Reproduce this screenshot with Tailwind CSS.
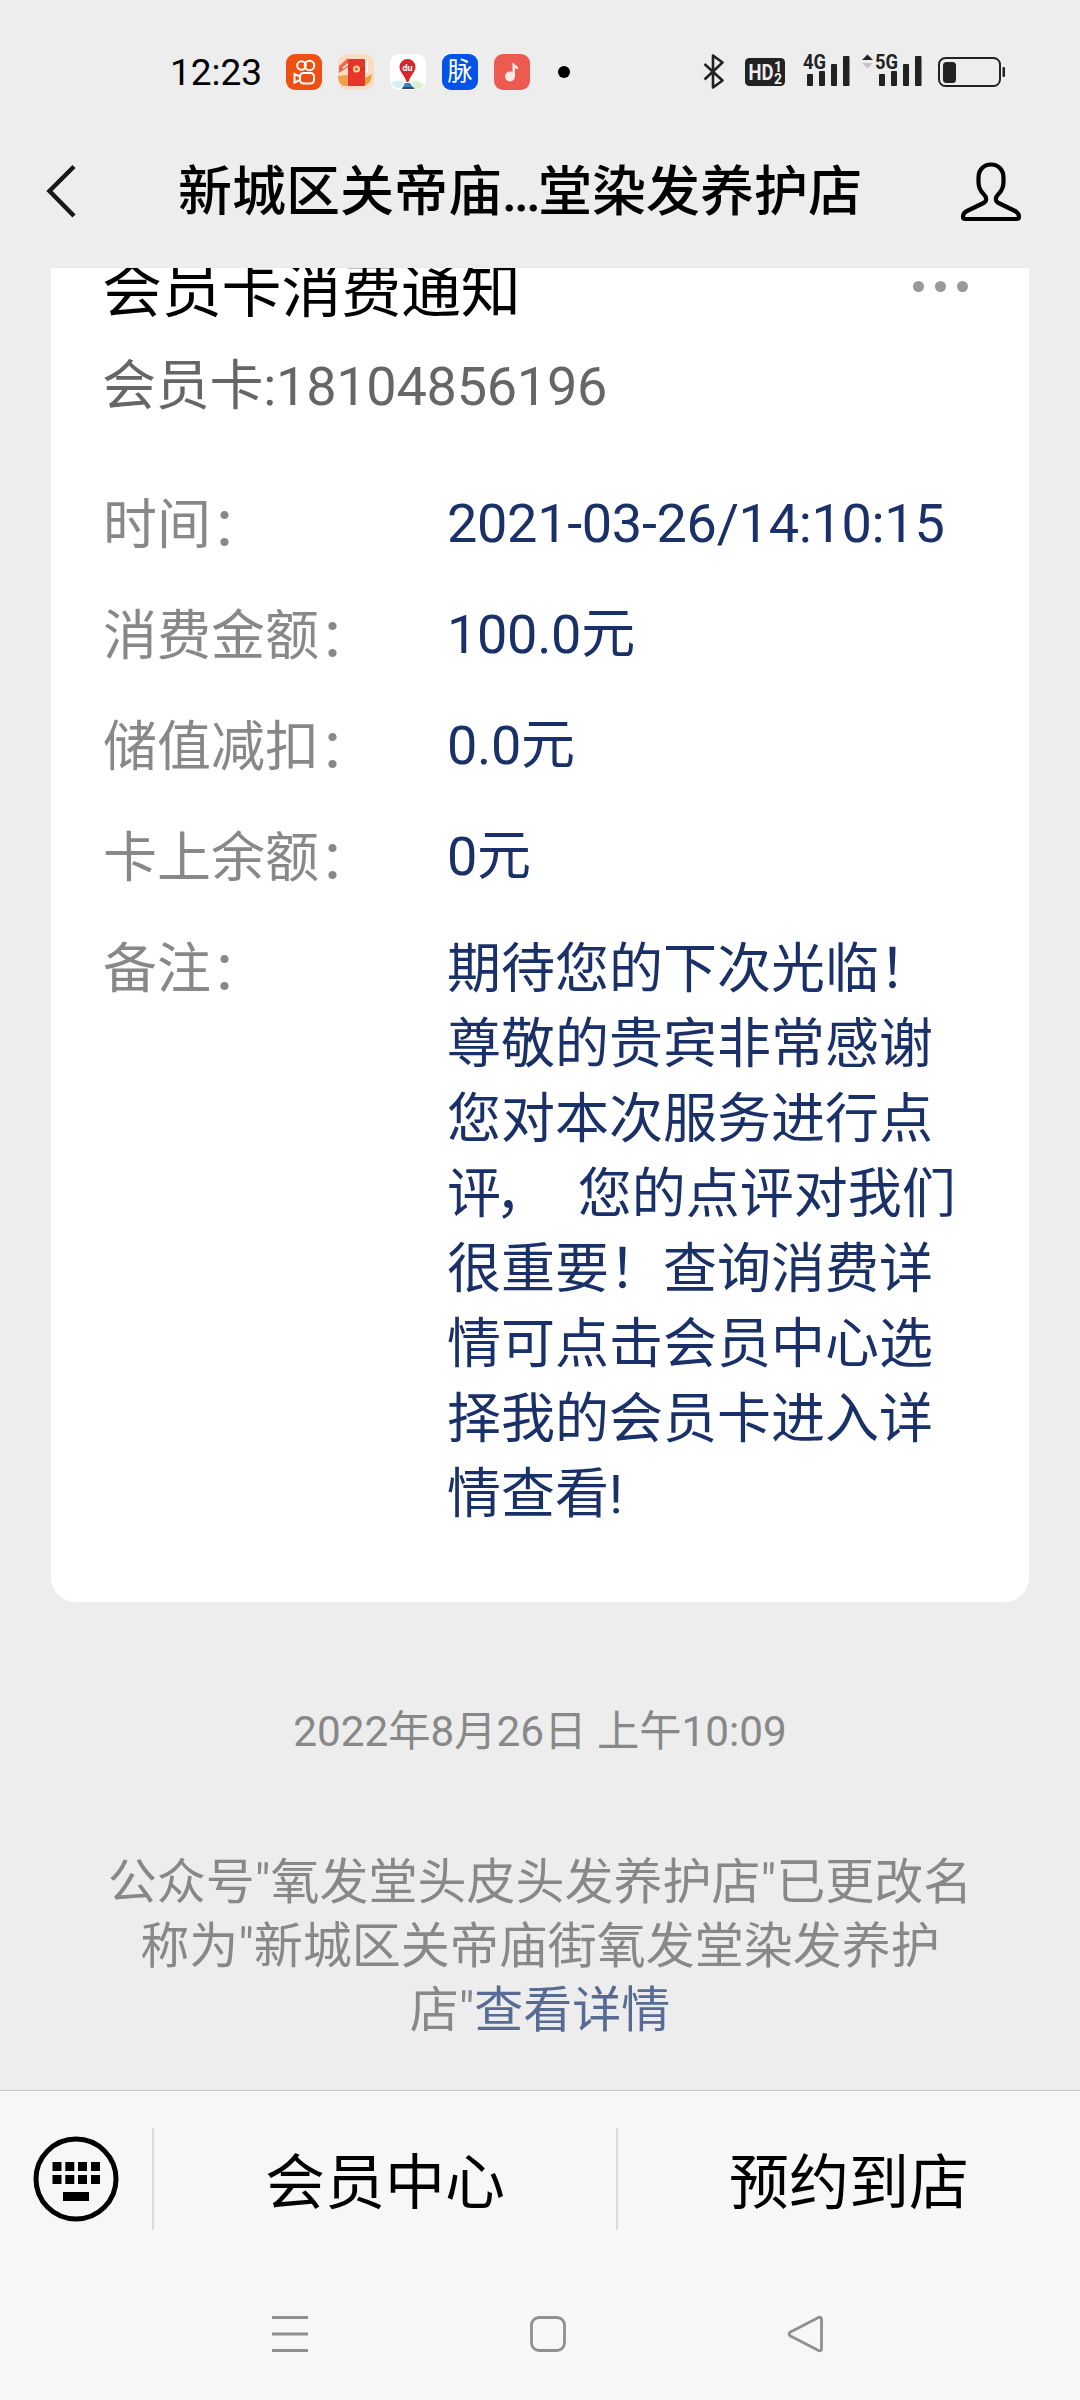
<!DOCTYPE html>
<html lang="zh-CN">
  <head>
    <meta charset="UTF-8" />
    <meta name="viewport" content="width=device-width, initial-scale=1.0" />
    <title>会员卡消费通知</title>
    <script src="https://cdn.jsdelivr.net/npm/@tailwindcss/browser@4"></script>
  </head>
  <body class="bg-[#ededed]">
    <div class="w-[1080px] h-[2400px] flex flex-col overflow-hidden bg-[#ededed] text-black font-[Roboto,'Noto_Sans_CJK_SC',sans-serif]">

      <!-- Status bar -->
      <div class="h-[104px] pt-10 pl-[170px] pr-[74px] flex items-center justify-between shrink-0">
        <div class="flex items-center gap-4">
          <span class="w-[100px] text-[37px] leading-9 mt-0.5">12:23</span>
          <svg class="w-9 h-9" viewBox="0 0 36 36" fill="none" stroke="#fff" stroke-width="2">
            <rect width="36" height="36" rx="9" fill="#ee5013" stroke="none" />
            <circle cx="15.5" cy="11.5" r="4.3" />
            <circle cx="23.5" cy="11.5" r="4.8" />
            <rect x="14" y="19" width="14" height="10.5" rx="3.5" />
            <path d="M14 22.5 8.5 20v8.5l5.5-2.5" />
          </svg>
          <svg class="w-9 h-9" viewBox="0 0 36 36">
            <rect width="36" height="36" rx="9" fill="#f9dcc2" />
            <path d="M1 12 10 4v9L1 19z" fill="#ee6a4c" />
            <path d="M0 22l10-1v11H5q-5-3-5-10z" fill="#f0a04a" />
            <path d="M27 24l7-4-2 8-5 3z" fill="#ef9a3b" />
            <rect x="10" y="5" width="17" height="27" rx="1" fill="#e7352c" />
            <path d="M10 14q8.5 5 17 0" fill="none" stroke="#c9201f" stroke-width="1" />
            <circle cx="18.5" cy="15" r="3.6" fill="#f6cf8d" />
            <circle cx="18.5" cy="15" r="1.3" fill="#d8452c" />
            <path d="M29 7v11M5 14l5-4" stroke="#fff" stroke-width="1.5" />
          </svg>
          <svg class="w-9 h-9" viewBox="0 0 36 36">
            <rect width="36" height="36" rx="9" fill="#fff" />
            <path d="M1 29q8-4 14-1l-4 6H8q-5-1-7-5z" fill="#d6eef6" />
            <path d="M22 27q7-1 12 4-3 4-7 4h-4z" fill="#d9f0cf" />
            <path d="M15 29h5l4 6H12z" fill="#3a7fc4" />
            <path d="M13 33h10l1.5 2H12z" fill="#3a4a63" />
            <path d="M17.5 5a8 8 0 0 1 8 8c0 5-5 8-7 15h-2c-2-7-7-10-7-15a8 8 0 0 1 8-8z" fill="#d9262c" />
            <text x="17.5" y="16.5" text-anchor="middle" font-size="9" font-weight="700" fill="#fff">du</text>
          </svg>
          <div class="w-9 h-9 rounded-[9px] bg-[#0452e8] text-white text-[25px] leading-9 text-center">脉</div>
          <svg class="w-9 h-9" viewBox="0 0 36 36">
            <rect width="36" height="36" rx="9" fill="#ec5a50" />
            <circle cx="16" cy="22.5" r="5" fill="#fde9e6" />
            <path d="M18.5 22V8.5l5.5 4.5v2.5l-3-1.5v8z" fill="#fde9e6" />
          </svg>
          <span class="w-3 h-3 ml-3 rounded-full bg-black"></span>
        </div>

        <div class="flex items-center">
          <svg class="w-[22px] h-9" viewBox="0 0 22 36" fill="none" stroke="#222" stroke-width="2.6" stroke-linejoin="round">
            <path d="M1.5 10 19.5 26.5 10 33.5V1.5l9.5 7L1.5 25.5" />
          </svg>
          <svg class="w-10 h-9 ml-[20px]" viewBox="0 0 40 36" fill="#ededed" font-weight="700">
            <rect y="4" width="40" height="28" rx="4.5" fill="#222" />
            <text x="3.5" y="26" font-size="22" textLength="25" lengthAdjust="spacingAndGlyphs">HD</text>
            <text x="29" y="17.5" font-size="14">1</text>
            <text x="29" y="29.5" font-size="14">2</text>
          </svg>
          <svg class="w-[47px] h-9 ml-[18px] overflow-visible" viewBox="0 0 47 36" fill="#222">
            <text x="0" y="14.8" font-size="20" font-weight="700" textLength="23" lengthAdjust="spacingAndGlyphs">4G</text>
            <rect x="4" y="20" width="6" height="12" rx="1" />
            <rect x="16" y="17" width="6" height="15" rx="1" />
            <rect x="28" y="10" width="6" height="22" rx="1" />
            <rect x="40" y="2" width="6.5" height="30" rx="1" />
          </svg>
          <svg class="w-[60px] h-9 ml-[12px] overflow-visible" viewBox="0 0 60 36" fill="#222">
            <path d="M0 6 5.5 0.5 11 6z" />
            <path d="M0 9h11l-5.5 5.5z" fill="#c4c4c4" />
            <text x="13" y="14.8" font-size="20" font-weight="700" textLength="23" lengthAdjust="spacingAndGlyphs">5G</text>
            <rect x="17" y="20" width="6" height="12" rx="1" />
            <rect x="29" y="17" width="6" height="15" rx="1" />
            <rect x="41" y="10" width="6" height="22" rx="1" />
            <rect x="53" y="2" width="6.5" height="30" rx="1" />
          </svg>
          <svg class="w-[68px] h-9 ml-[16px]" viewBox="0 0 68 36">
            <rect x="1" y="4" width="61" height="28" rx="6.5" fill="none" stroke="#222" stroke-width="2" />
            <rect x="5" y="8" width="13" height="21" rx="3.5" fill="#222" />
            <rect x="64.5" y="13" width="2.5" height="10" rx="1" fill="#222" />
          </svg>
        </div>
      </div>

      <!-- Chat title -->
      <div class="h-[163px] pt-[11px] pl-[44px] pr-[56px] flex items-center justify-between shrink-0">
        <svg class="w-[34px] h-[58px]" viewBox="0 0 34 58" fill="none" stroke="#181818" stroke-width="4.5">
          <path d="M30 4.5 5.5 29 30 54" />
        </svg>
        <h1 class="text-[54px] leading-[75px] font-medium mt-[3px] ml-[4px] whitespace-nowrap">新城区关帝庙<span class="tracking-[-3px]">...</span>堂染发养护店</h1>
        <svg class="w-[66px] h-[66px]" viewBox="0 0 66 66" fill="none" stroke="#000" stroke-width="4.2" stroke-linejoin="round">
          <path d="M33 6.5C25.5 6.5 20.5 12 20.5 19.5V24C20.5 29 22.5 33 25.5 36C28.5 39 29.5 43 25.5 45L9 53Q5 55 5 58.5Q5 61 7.5 61H58.5Q61 61 61 58.5Q61 55 57 53L40.5 45C36.5 43 37.5 39 40.5 36C43.5 33 45.5 29 45.5 24V19.5C45.5 12 40.5 6.5 33 6.5Z" />
        </svg>
      </div>

      <!-- Messages -->
      <main class="h-[1823px] shrink-0 overflow-hidden border-t border-[#e9e9e9]">
        <section class="w-[978px] h-[1335px] mx-auto -mt-px px-[52px] bg-white rounded-b-[24px] overflow-hidden">
          <div class="flex items-start justify-between -mt-[17px]">
            <h2 class="text-[60px] leading-[84px] tracking-[-0.2px] -ml-px">会员卡消费通知</h2>
            <div class="flex gap-[11px] mt-[31px] mr-[9px]">
              <span class="w-[11px] h-[11px] rounded-full bg-[#999]"></span>
              <span class="w-[11px] h-[11px] rounded-full bg-[#999]"></span>
              <span class="w-[11px] h-[11px] rounded-full bg-[#999]"></span>
            </div>
          </div>
          <p class="mt-[15px] -ml-px text-[54px] leading-[75px] tracking-[-0.25px] text-[#666]">会员卡:18104856196</p>

          <dl class="mt-[62px] grid grid-cols-[344px_1fr] gap-y-9 text-[54px] leading-[75px] whitespace-nowrap text-[#1a3068]">
            <dt class="translate-y-0.5 text-[#888]">时间<span class="inline-block translate-y-0.5">：</span></dt>
            <dd class="tracking-[-0.3px]">2021-03-26/14:10:15</dd>
            <dt class="translate-y-0.5 text-[#888]">消费金额<span class="inline-block translate-y-0.5">：</span></dt>
            <dd class="tracking-[-0.3px]">100.0元</dd>
            <dt class="translate-y-0.5 text-[#888]">储值减扣<span class="inline-block translate-y-0.5">：</span></dt>
            <dd class="tracking-[-0.3px]">0.0元</dd>
            <dt class="translate-y-0.5 text-[#888]">卡上余额<span class="inline-block translate-y-0.5">：</span></dt>
            <dd class="tracking-[-0.3px]">0元</dd>
            <dt class="translate-y-0.5 text-[#888]">备注<span class="inline-block translate-y-0.5">：</span></dt>
            <dd class="translate-y-0.5">
              期待您的下次光临！<br />
              尊敬的贵宾非常感谢<br />
              您对本次服务进行点<br />
              评<span class="inline-block -translate-x-1.5">，</span><span class="tracking-[-2px]">&nbsp;&nbsp;</span>您的点评对我们<br />
              很重要！查询消费详<br />
              情可点击会员中心选<br />
              择我的会员卡进入详<br />
              情查看!
            </dd>
          </dl>
        </section>

        <p class="mt-[100px] text-center text-[42.3px] leading-[60px] text-[#888]">2022年8月26日 上午10:09</p>
        <p class="mt-[89px] text-center text-[49px] leading-[64px] text-[#888]">
          公众号"氧发堂头皮头发养护店"已更改名<br />
          称为"新城区关帝庙街氧发堂染发养护<br />
          店"<a class="text-[#576b95]">查看详情</a>
        </p>
      </main>

      <!-- Menu bar -->
      <footer class="flex-1 bg-[#f7f7f7] border-t border-[#c8c8c8]">
        <div class="h-[176px] flex items-center text-[60px]">
          <div class="w-[152px] flex justify-center">
            <svg class="w-[86px] h-[86px]" viewBox="0 0 86 86">
              <circle cx="43" cy="43" r="40" fill="none" stroke="#000" stroke-width="5" />
              <path d="M19.5 26h9v9h-9zM32.3 26h9v9h-9zM45 26h9v9h-9zM58 26h9v9h-9zM19.5 39h9v9h-9zM32.3 39h9v9h-9zM45 39h9v9h-9zM58 39h9v9h-9zM30 56h26v9H30z" />
            </svg>
          </div>
          <div class="h-[102px] w-[464px] pt-2.5 border-l-2 border-[#dcdcdc] flex items-center justify-center">会员中心</div>
          <div class="h-[102px] w-[464px] pt-2.5 border-l-2 border-[#dcdcdc] flex items-center justify-center">预约到店</div>
        </div>

        <!-- System navigation -->
        <div class="h-[133px] pl-[270px] pr-[254px] flex items-center justify-between">
          <svg class="w-10 h-10" viewBox="0 0 40 40" stroke="#909090" stroke-width="3">
            <path d="M2 3.5h36M2 20h36M2 36.5h36" />
          </svg>
          <svg class="w-10 h-10" viewBox="0 0 40 40" fill="none" stroke="#909090" stroke-width="2.8">
            <rect x="3.5" y="3.5" width="33" height="33" rx="7.5" />
          </svg>
          <svg class="w-10 h-10" viewBox="0 0 40 40" fill="none" stroke="#909090" stroke-width="2.8" stroke-linejoin="round">
            <path d="M32.5 3.5Q35.5 2.5 35.5 5.5V34.5Q35.5 37.5 32.5 36.5L4.5 22Q1.5 20 4.5 18Z" />
          </svg>
        </div>
      </footer>
    </div>
  </body>
</html>
